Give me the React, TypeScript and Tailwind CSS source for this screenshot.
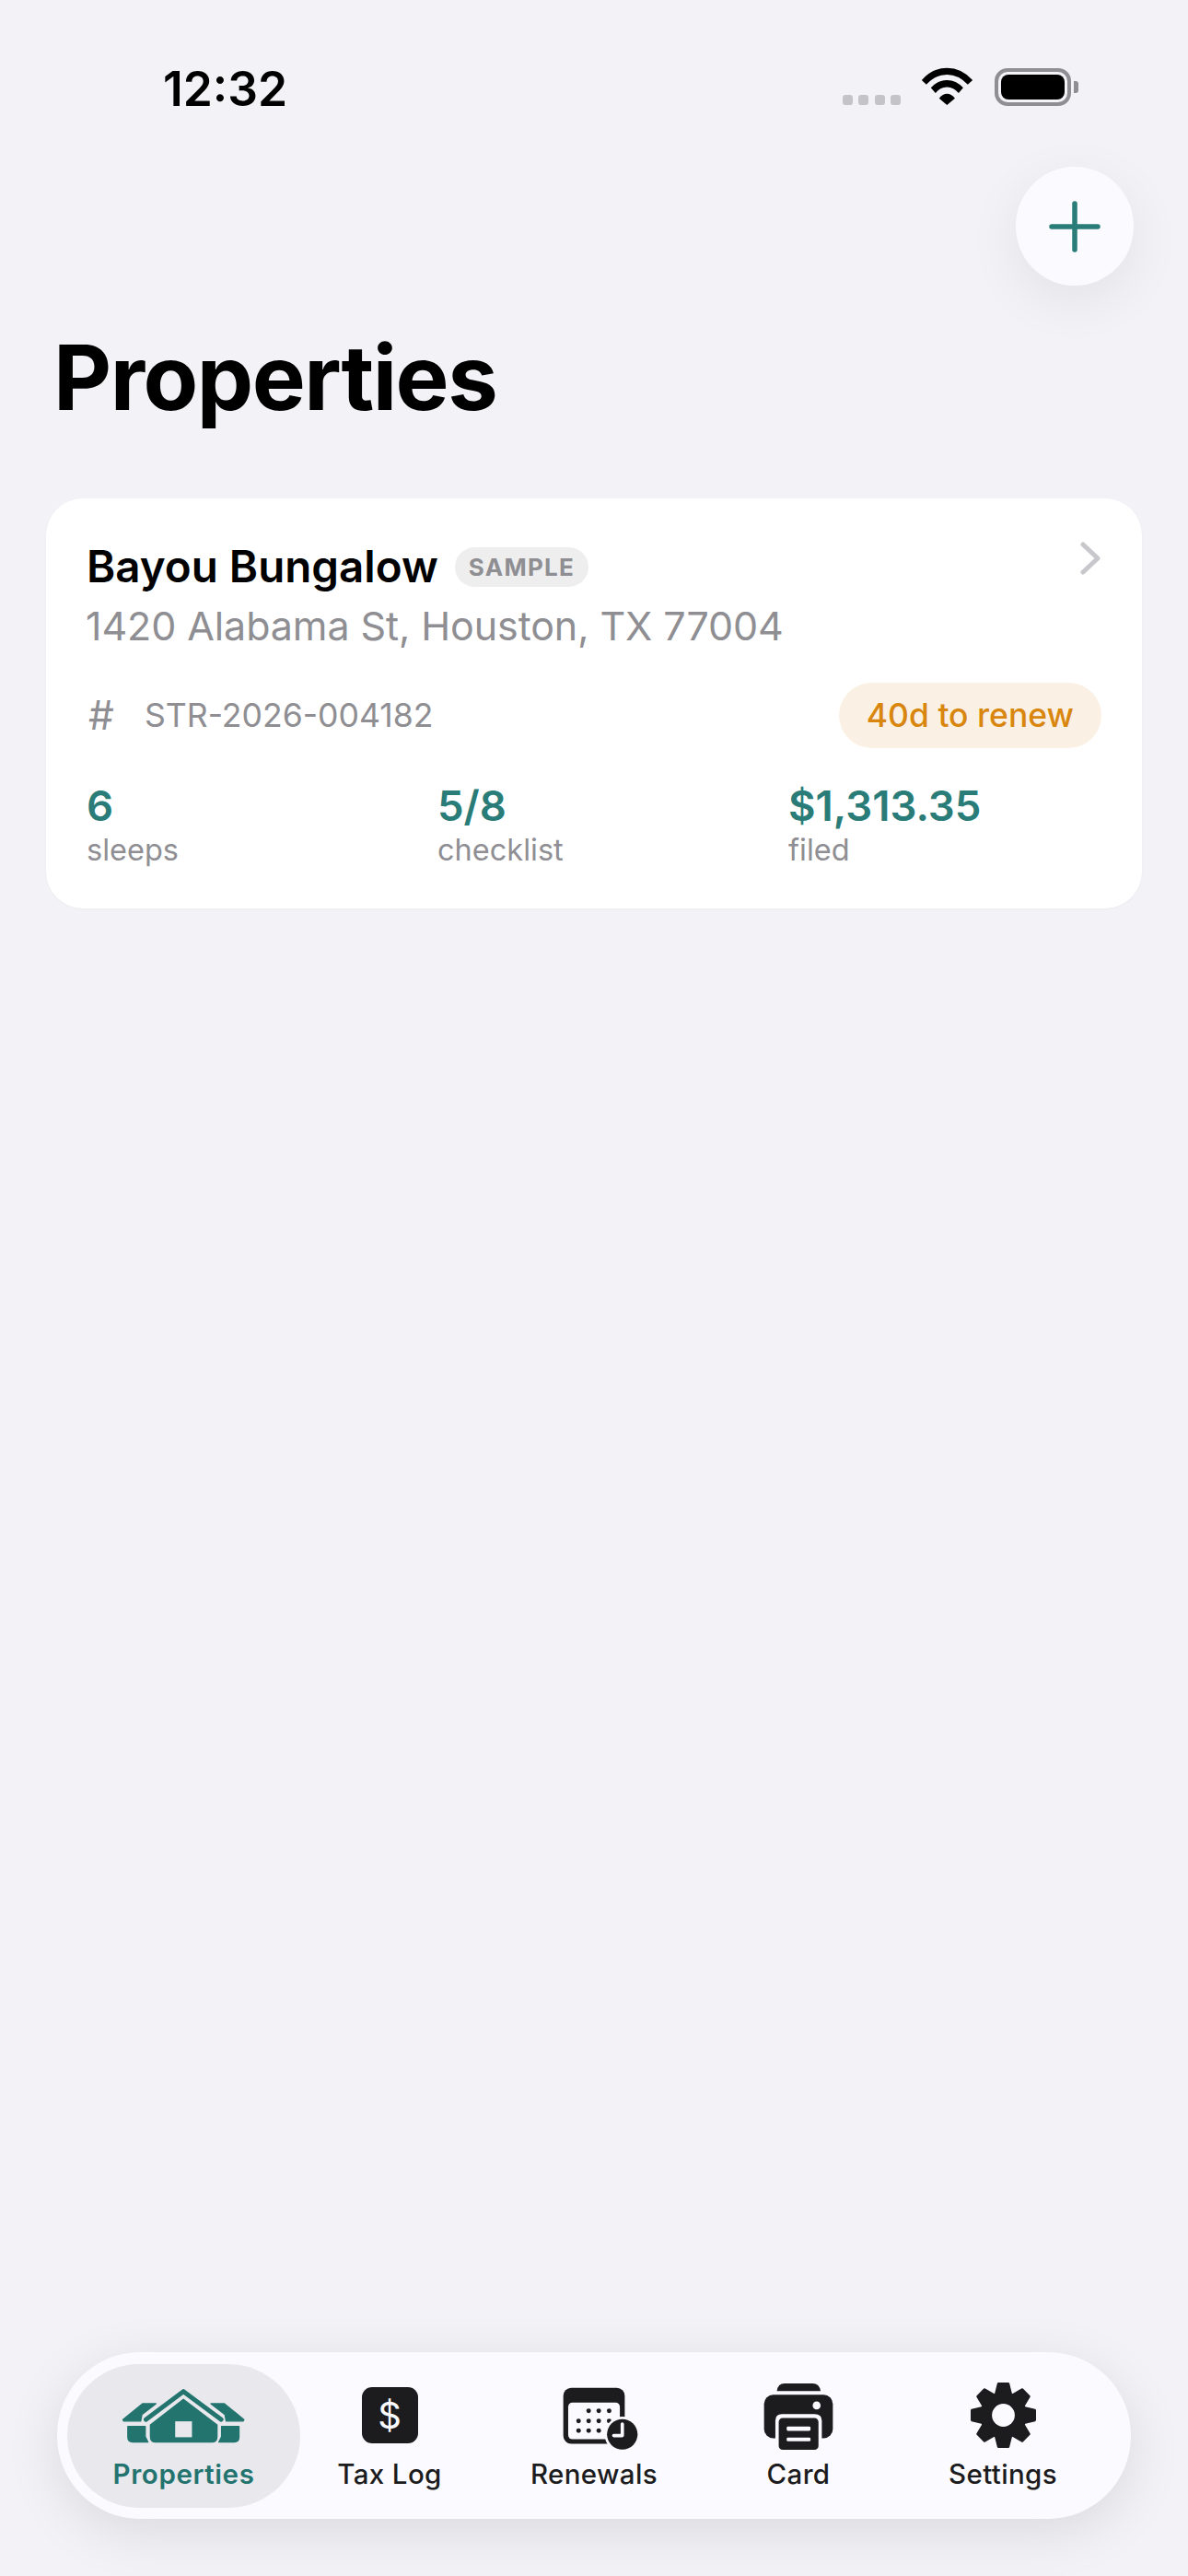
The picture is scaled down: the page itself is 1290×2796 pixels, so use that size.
import type { ReactNode } from "react";

const FONT = "font-['Inter','Liberation_Sans',sans-serif]";

const STATS = [
  { value: "6", label: "sleeps", width: "w-[381px]" },
  { value: "5/8", label: "checklist", width: "w-[381px]" },
  { value: "$1,313.35", label: "filed", width: "" },
];

function WifiIcon() {
  return (
    <svg viewBox="300 65 180 130" className="w-[60px] h-[43px]" fill="#000">
      <path d="M305 110 Q340 70 388 70 Q436 70 472 110 L456 125 Q426 92 388 92 Q350 92 320 125 Z" />
      <path d="M335 135 Q358 110 388 110 Q418 110 441 135 L426 153 Q410 133 388 133 Q366 133 350 153 Z" />
      <path d="M362 170 Q374 155 388 155 Q402 155 414 170 L388 192 Z" />
    </svg>
  );
}

function HouseIcon() {
  return (
    <svg viewBox="66 66 406 184" className="w-[135px] h-[61px]">
      <g fill="#23746f" stroke="#23746f" strokeLinejoin="round">
        <path d="M134 120 H178 L132 156 L128 177 H72 L70 172 Z" strokeWidth="4" />
        <path d="M402 120 H358 L404 156 L408 177 H464 L466 172 Z" strokeWidth="4" />
        <path d="M86 195 H143 V228 L152 246 H102 Q86 246 86 230 Z" strokeWidth="4" />
        <path d="M450 195 H393 V228 L384 246 H434 Q450 246 450 230 Z" strokeWidth="4" />
        <path d="M268 106 L378 190 V228 Q378 246 360 246 H178 Q160 246 160 228 V190 Z" strokeWidth="4" />
        <path d="M145 172 L268 80 L392 172" fill="none" strokeWidth="15" strokeLinecap="round" />
      </g>
      <rect x="241" y="178" width="55" height="52" fill="#e8e8ed" />
    </svg>
  );
}

function RenewalsIcon() {
  const dots = [
    [360, 232], [393, 232], [427, 232],
    [327, 265], [360, 265], [393, 265], [427, 265],
    [327, 297], [360, 297], [393, 297],
  ];
  return (
    <svg viewBox="275 155 247 207" className="w-[82px] h-[69px] mt-[7px] ml-[14px]">
      <rect x="277" y="157" width="201" height="183" rx="26" fill="#1c1c1e" />
      <rect x="293" y="205" width="169" height="120" rx="14" fill="#fbfbff" />
      {dots.map(([cx, cy]) => (
        <circle key={`${cx}-${cy}`} cx={cx} cy={cy} r="7.5" fill="#1c1c1e" />
      ))}
      <circle cx="470" cy="309" r="58" fill="#fbfbff" />
      <circle cx="470" cy="309" r="50" fill="#1c1c1e" />
      <path d="M470 275 V313 H442" fill="none" stroke="#fbfbff" strokeWidth="11" strokeLinecap="round" strokeLinejoin="round" />
    </svg>
  );
}

function PrinterIcon() {
  return (
    <svg viewBox="931 141 229 221" className="w-[76px] h-[74px] mt-[2px]">
      <path d="M975 168 Q978 143 1000 143 H1092 Q1114 143 1118 168 Z" fill="#1c1c1e" />
      <rect x="933" y="180" width="225" height="142" rx="30" fill="#1c1c1e" />
      <circle cx="1105" cy="215" r="13" fill="#fbfbff" />
      <path d="M970 362 V265 Q970 243 992 243 H1098 Q1122 243 1122 265 V362 Z" fill="#fbfbff" />
      <rect x="981" y="256" width="130" height="104" rx="13" fill="#1c1c1e" />
      <rect x="1007" y="284" width="78" height="14" rx="4" fill="#fbfbff" />
      <rect x="1007" y="320" width="78" height="12" rx="4" fill="#fbfbff" />
    </svg>
  );
}

function GearIcon() {
  const teeth = [0, 45, 90, 135, 180, 225, 270, 315];
  return (
    <svg viewBox="0 0 212 212" className="w-[71px] h-[71px]">
      <g fill="#1c1c1e" stroke="#1c1c1e" strokeWidth="8" strokeLinejoin="round">
        {teeth.map((deg) => (
          <path key={deg} d="M82 36 L90 4 H122 L130 36 Z" transform={`rotate(${deg} 106 106)`} />
        ))}
      </g>
      <circle cx="106" cy="106" r="76" fill="#1c1c1e" />
      <circle cx="106" cy="106" r="37" fill="#fbfbff" />
    </svg>
  );
}

function DollarIcon() {
  return (
    <div className="w-[61px] h-[61px] rounded-[11px] bg-[#1c1c1e] flex items-center justify-center text-[#fbfbff] text-[40px] leading-none font-normal">
      $
    </div>
  );
}

function TabItem({ icon, label, active }: { icon: ReactNode; label: string; active?: boolean }) {
  return (
    <div
      className={
        active
          ? "w-[253px] h-[156px] mr-[-14px] rounded-[78px] bg-[#e8e8ed] flex flex-col items-center shrink-0"
          : "w-[222px] h-[156px] flex flex-col items-center shrink-0"
      }
    >
      <div className="h-[101px] pt-[11px] flex items-center justify-center">{icon}</div>
      <div
        className={
          active
            ? "text-[29.5px] leading-[36px] tracking-[0.6px] font-semibold text-[#23746f]"
            : "text-[29.5px] leading-[36px] tracking-[0.35px] font-medium text-[#1c1c1e]"
        }
      >
        {label}
      </div>
    </div>
  );
}

export default function App() {
  return (
    <div className={`${FONT} relative w-[1290px] h-[2796px] bg-[#f2f2f7] flex flex-col overflow-hidden`}>
      {/* status bar */}
      <div className="h-[181px] pl-[177px] pr-[119px] pt-[66px] flex justify-between items-start">
        <div className="text-[51.5px] leading-[60px] font-semibold text-black">12:32</div>
        <div className="flex items-end pt-[6px]">
          <div className="flex gap-[6.5px] mb-[1px]">
            {[0, 1, 2, 3].map((i) => (
              <div key={i} className="w-[11px] h-[11px] rounded-[3px] bg-[#c4c4c8]" />
            ))}
          </div>
          <div className="ml-[21px]">
            <WifiIcon />
          </div>
          <div className="ml-[21px] w-[83px] h-[41px] rounded-[14px] border-[4px] border-[#8e8e93] p-[3px]">
            <div className="w-full h-full rounded-[8px] bg-black" />
          </div>
          <div className="ml-[3px] mb-[14px] w-[5px] h-[13px] rounded-r-[3px] bg-[#8e8e93]" />
        </div>
      </div>

      {/* add button */}
      <div className="flex justify-end pr-[59px]">
        <div className="w-[128px] h-[129px] rounded-full bg-[#fbfbff] flex items-center justify-center shadow-[0_16px_60px_rgba(0,0,0,0.07)]">
          <svg width="56" height="56" viewBox="0 0 56 56" fill="none" stroke="#2a7c78" strokeWidth="5.5" strokeLinecap="round">
            <path d="M28 3 V53 M3 28 H53" />
          </svg>
        </div>
      </div>

      <h1 className="mt-[45px] pl-[58px] text-[97.5px] leading-[110px] font-bold tracking-[-1.5px] text-black">
        Properties
      </h1>

      {/* property card */}
      <div className="relative mt-[76px] mx-[50px] h-[445px] rounded-[40px] bg-white pl-[44px] pr-[44px] pt-[46px] shadow-[0_1px_3px_rgba(0,0,0,0.03)]">
        <div className="flex items-center h-[56px]">
          <span className="text-[47.5px] leading-[56px] font-semibold text-black">Bayou Bungalow</span>
          <span className="ml-[18px] h-[43px] px-[15px] rounded-full bg-[#eeeeef] flex items-center text-[26px] font-bold tracking-[1.3px] text-[#8e8e93]">
            SAMPLE
          </span>
        </div>
        <div className="mt-[10px] -ml-[1px] text-[43px] leading-[52px] tracking-[-0.1px] text-[#8e8e93]">
          1420 Alabama St, Houston, TX 77004
        </div>
        <div className="mt-[36px] flex items-center justify-between">
          <div className="flex items-center">
            <span className="w-[63px] pl-[2px] text-[44px] leading-[71px] text-[#8e8e93]">#</span>
            <span className="text-[35.6px] leading-[71px] text-[#8e8e93]">STR-2026-004182</span>
          </div>
          <div className="h-[71px] px-[30px] rounded-full bg-[#faf1e4] flex items-center text-[35.5px] font-medium text-[#d9860f]">
            40d to renew
          </div>
        </div>
        <div className="mt-[37px] flex">
          {STATS.map((s) => (
            <div key={s.label} className={s.width}>
              <div className="text-[45.5px] leading-[52px] font-semibold text-[#2a7c78]">{s.value}</div>
              <div className="mt-[2px] text-[32.5px] leading-[40px] text-[#8e8e93]">{s.label}</div>
            </div>
          ))}
        </div>
        <svg className="absolute right-[45px] top-[47px]" width="22" height="36" viewBox="0 0 22 36" fill="none" stroke="#c7c7cc" strokeWidth="5" strokeLinecap="round" strokeLinejoin="round">
          <path d="M3 3 L19 18 L3 33" />
        </svg>
      </div>

      {/* tab bar */}
      <div className="mt-auto mb-[62px] ml-[62px] w-[1166px] h-[181px] rounded-[90px] bg-[#fbfbff] pl-[11px] flex items-center shadow-[0_14px_60px_rgba(0,0,0,0.1)]">
        <TabItem active icon={<HouseIcon />} label="Properties" />
        <TabItem icon={<DollarIcon />} label="Tax Log" />
        <TabItem icon={<RenewalsIcon />} label="Renewals" />
        <TabItem icon={<PrinterIcon />} label="Card" />
        <TabItem icon={<GearIcon />} label="Settings" />
      </div>
    </div>
  );
}
